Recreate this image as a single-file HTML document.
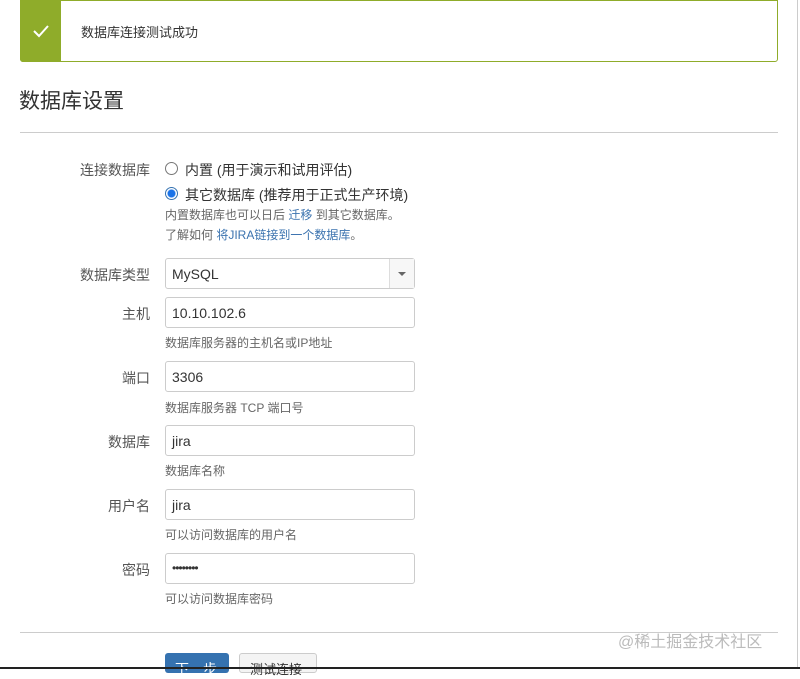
<!DOCTYPE html>
<html><head><meta charset="utf-8"><style>
*{box-sizing:border-box;margin:0;padding:0}
body{width:800px;height:669px;overflow:hidden;background:#fff;font-family:"Liberation Sans","Noto Sans CJK SC",sans-serif;color:#333;position:relative}
.abs{position:absolute}
.alert{left:20px;top:0;width:758px;height:62px;border:1px solid #8fac2a;border-radius:0 0 3px 3px;}
.alert .ic{position:absolute;left:-1px;top:-1px;width:41px;height:62px;background:#8fac2a;border-radius:0 0 0 3px}
.lbl{font-size:14px;color:#555;text-align:right;width:130px;left:20px}
.inp{left:165px;width:250px;height:31px;border:1px solid #ccc;border-radius:3px;font-size:14px;padding:7px 6px;color:#333}
.hint{left:165px;font-size:12px;color:#666}
a{color:#3b73af;text-decoration:none}
.radio{width:13px;height:13px;border:1px solid #777;border-radius:50%;left:165px}
</style></head><body>
<div class="abs alert"><div class="ic"><svg width="41" height="62"><path d="M14 31l5 5 9-10" stroke="#fff" stroke-width="2" fill="none"/></svg></div>
<div class="abs" style="left:60px;top:21px;font-size:13px;color:#333">数据库连接测试成功</div></div>
<div class="abs" style="left:19px;top:85px;font-size:21px;color:#333">数据库设置</div>
<div class="abs" style="left:20px;top:132px;width:758px;height:1px;background:#ccc"></div>
<div class="abs lbl" style="top:160px">连接数据库</div>
<div class="abs radio" style="top:162px"></div>
<div class="abs" style="left:185px;top:160px;font-size:14px">内置 (用于演示和试用评估)</div>
<div class="abs radio" style="top:187px;border-color:#3572b0;background:radial-gradient(circle,#1a73e8 3.5px,#fff 4.5px)"></div>
<div class="abs" style="left:185px;top:185px;font-size:14px">其它数据库 (推荐用于正式生产环境)</div>
<div class="abs hint" style="top:206px">内置数据库也可以日后 <a>迁移</a> 到其它数据库。</div>
<div class="abs hint" style="top:226px">了解如何 <a>将JIRA链接到一个数据库</a>。</div>

<div class="abs lbl" style="top:265px">数据库类型</div>
<div class="abs inp" style="top:258px">MySQL<div class="abs" style="right:0;top:0;width:25px;height:29px;border-left:1px solid #ddd;background:#f7f7f7"><svg width="25" height="29"><path d="M8 13h8l-4 4z" fill="#666"/></svg></div></div>
<div class="abs lbl" style="top:304px">主机</div>
<div class="abs inp" style="top:297px">10.10.102.6</div>
<div class="abs hint" style="top:334px">数据库服务器的主机名或IP地址</div>
<div class="abs lbl" style="top:368px">端口</div>
<div class="abs inp" style="top:361px">3306</div>
<div class="abs hint" style="top:399px">数据库服务器 TCP 端口号</div>
<div class="abs lbl" style="top:432px">数据库</div>
<div class="abs inp" style="top:425px">jira</div>
<div class="abs hint" style="top:462px">数据库名称</div>
<div class="abs lbl" style="top:496px">用户名</div>
<div class="abs inp" style="top:489px">jira</div>
<div class="abs hint" style="top:526px">可以访问数据库的用户名</div>
<div class="abs lbl" style="top:560px">密码</div>
<div class="abs inp" style="top:553px;font-size:12px;letter-spacing:-1px">••••••••</div>
<div class="abs hint" style="top:590px">可以访问数据库密码</div>
<div class="abs" style="left:20px;top:632px;width:758px;height:1px;background:#ccc"></div>
<div class="abs" style="left:165px;top:653px;width:64px;height:20px;background:#3572b0;border-radius:3px;color:#fff;font-size:14px;padding:6px 10px">下一步</div>
<div class="abs" style="left:239px;top:653px;width:78px;height:20px;background:#f4f4f4;border:1px solid #ccc;border-radius:3px;font-size:13px;padding:5px 10px">测试连接</div>
<div class="abs" style="left:618px;top:628px;font-size:16px;color:#bbb">@稀土掘金技术社区</div>
<div class="abs" style="left:0;top:667px;width:800px;height:2px;background:#222"></div>
<div class="abs" style="left:797px;top:0;width:1px;height:667px;background:#ccc"></div>
</body></html>
